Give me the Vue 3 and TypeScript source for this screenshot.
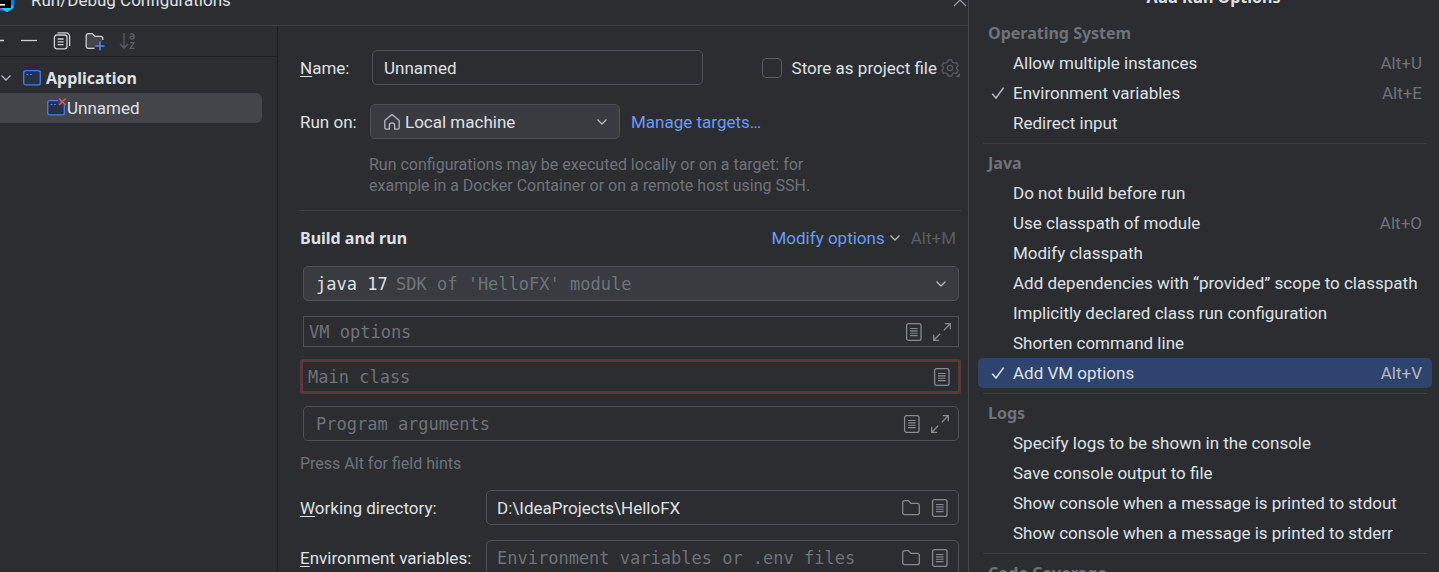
<script setup lang="ts">
import { ref } from 'vue'

interface OptionItem {
  label: string
  shortcut?: string
  checked?: boolean
  active?: boolean
}
interface OptionGroup {
  title: string
  items: OptionItem[]
}

const name = ref('Unnamed')
const storeAsFile = ref(false)
const vmOptions = ref('')
const mainClass = ref('')
const programArgs = ref('')
const workingDir = ref('D:\\IdeaProjects\\HelloFX')
const envVars = ref('')

const groups: OptionGroup[] = [
  {
    title: 'Operating System',
    items: [
      { label: 'Allow multiple instances', shortcut: 'Alt+U' },
      { label: 'Environment variables', shortcut: 'Alt+E', checked: true },
      { label: 'Redirect input' },
    ],
  },
  {
    title: 'Java',
    items: [
      { label: 'Do not build before run' },
      { label: 'Use classpath of module', shortcut: 'Alt+O' },
      { label: 'Modify classpath' },
      { label: 'Add dependencies with “provided” scope to classpath' },
      { label: 'Implicitly declared class run configuration' },
      { label: 'Shorten command line' },
      { label: 'Add VM options', shortcut: 'Alt+V', checked: true, active: true },
    ],
  },
  {
    title: 'Logs',
    items: [
      { label: 'Specify logs to be shown in the console' },
      { label: 'Save console output to file' },
      { label: 'Show console when a message is printed to stdout' },
      { label: 'Show console when a message is printed to stderr' },
    ],
  },
  { title: 'Code Coverage', items: [] },
]
</script>

<template>
  <div class="screen">
    <svg class="defs" aria-hidden="true">
      <symbol id="i-chevron" viewBox="0 0 12 12">
        <path d="M1.5 3.5L6 8L10.5 3.5" fill="none" stroke="currentColor" stroke-width="1.3" />
      </symbol>
      <symbol id="i-list" viewBox="0 0 20 20">
        <rect x="2.6" y="1.6" width="14.4" height="16.8" rx="2" fill="none" stroke="currentColor" stroke-width="1.3" />
        <path d="M6 6.5H13.6M6 8.9H13.6M6 11.2H13.6M6 13.6H13.6" stroke="currentColor" stroke-width="1.1" />
      </symbol>
      <symbol id="i-expand" viewBox="0 0 20 20">
        <path d="M11.8 8.2L18 2M12.8 1.7H18.3V7.2M8.2 11.8L2 18M1.7 12.8V18.3H7.2" fill="none" stroke="currentColor" stroke-width="1.3" />
      </symbol>
      <symbol id="i-folder" viewBox="0 0 20 20">
        <path d="M1.7 4.6A2 2 0 0 1 3.7 2.6H7.2L10 5.3H16.3A2 2 0 0 1 18.3 7.3V14.7A2 2 0 0 1 16.3 16.7H3.7A2 2 0 0 1 1.7 14.7Z" fill="none" stroke="currentColor" stroke-width="1.3" />
      </symbol>
      <symbol id="i-check" viewBox="0 0 16 16">
        <path d="M2.2 8.8L6 13L13.6 2.6" fill="none" stroke="currentColor" stroke-width="1.6" />
      </symbol>
      <symbol id="i-window" viewBox="0 0 18 16">
        <rect x="0.7" y="0.7" width="16.6" height="14.2" rx="2" fill="#25324d" stroke="#4d7cdc" stroke-width="1.3" />
        <path d="M3.5 4.5H5.5M7 4.5H9" stroke="#4d7cdc" stroke-width="1.2" />
      </symbol>
    </svg>

    <main class="dialog">
      <header class="titlebar">
        <svg class="logo" viewBox="0 0 24 24" aria-hidden="true">
          <path d="M0 3L10 0H20L24 6L23 20L16 24L0 20Z" fill="#087cfa" />
          <path d="M0 3L10 0L16 12L11 21L0 20Z" fill="#e0359a" />
          <path d="M10 20L22 17L22 20L16 24Z" fill="#21c8ff" />
          <rect x="3" y="3" width="17" height="17" fill="#000" />
          <rect x="6" y="16" width="8" height="1.6" fill="#fff" />
        </svg>
        <h1>Run/Debug Configurations</h1>
        <button class="close" type="button" aria-label="Close">
          <svg viewBox="0 0 14 14"><path d="M1 1L13 13M13 1L1 13" stroke="currentColor" stroke-width="1.2" /></svg>
        </button>
      </header>

      <div class="body">
        <aside class="sidebar">
          <div class="toolbar">
            <button type="button" aria-label="Add">
              <svg viewBox="0 0 20 20"><path d="M2 9.5H18M10 2V18" stroke="currentColor" stroke-width="1.3" /></svg>
            </button>
            <button type="button" aria-label="Remove">
              <svg viewBox="0 0 20 20"><path d="M2 9.5H18" stroke="currentColor" stroke-width="1.3" /></svg>
            </button>
            <button type="button" aria-label="Copy">
              <svg viewBox="0 0 20 20" fill="none" stroke="currentColor" stroke-width="1.3">
                <path d="M5.5 1.8H14A3.6 3.6 0 0 1 17.6 5.4V15" />
                <rect x="2.4" y="4" width="12.6" height="13.8" rx="2.4" />
                <path d="M5.6 8H11.6M5.6 10.8H11.6M5.6 13.6H11.6" />
              </svg>
            </button>
            <button type="button" aria-label="New folder">
              <svg viewBox="0 0 20 20" fill="none" stroke-width="1.3">
                <path d="M9.5 17.3H3.2A2 2 0 0 1 1.2 15.3V4.6A2 2 0 0 1 3.2 2.6H7.2L10 5.3H15.8A2 2 0 0 1 17.8 7.3V9L14 14Z" fill="#43454a" />
                <path d="M9.5 17.3H3.2A2 2 0 0 1 1.2 15.3V4.6A2 2 0 0 1 3.2 2.6H7.2L10 5.3H15.8A2 2 0 0 1 17.8 7.3V9" stroke="currentColor" />
                <path d="M10.5 15H19.5M15 10.5V19.5" stroke="#548af7" stroke-width="1.5" />
              </svg>
            </button>
            <button type="button" class="off" aria-label="Sort configurations" disabled>
              <svg viewBox="0 0 20 20" fill="none" stroke="currentColor" stroke-width="1.3">
                <path d="M6 2V16.8M2 13L6 17L10 13" />
                <path d="M12 3.4C12.8 2.4 16 2.2 16 4.6V8.3M16 5.2C13.5 5 12 5.5 12 6.8C12 8.6 15.3 8.4 16 6.6M12.2 11.7H16L12.2 17.3H16.4" />
              </svg>
            </button>
          </div>
          <ul class="tree">
            <li class="node parent">
              <svg class="chev"><use href="#i-chevron" /></svg>
              <svg class="win"><use href="#i-window" /></svg>
              <span>Application</span>
            </li>
            <li class="node child">
              <svg class="win bad" viewBox="0 0 18 16">
                <use href="#i-window" width="18" height="16" />
                <path d="M12 -1.5L18 4.5M18 -1.5L12 4.5" stroke="#43454a" stroke-width="4" />
                <path d="M12 -1.5L18.5 5M18.5 -1.5L12 5" stroke="#db5c5c" stroke-width="1.4" />
              </svg>
              <span>Unnamed</span>
            </li>
          </ul>
        </aside>

        <form class="form" @submit.prevent>
          <div class="row name-row">
            <label class="lbl" for="name"><u>N</u>ame:</label>
            <input id="name" v-model="name" class="box name" type="text" />
            <label class="store">
              <input v-model="storeAsFile" type="checkbox" />
              <span>Store as project file</span>
            </label>
            <button class="gear" type="button" aria-label="Storage settings">
              <svg viewBox="0 0 20 20" fill="none" stroke="currentColor" stroke-width="1.2">
                <path d="M7.4 1.8H10.6L11.4 4L13.2 5L15.5 4.6L17.1 7.4L15.6 9.2V10.8L17.1 12.6L15.5 15.4L13.2 15L11.4 16L10.6 18.2H7.4L6.6 16L4.8 15L2.5 15.4L0.9 12.6L2.4 10.8V9.2L0.9 7.4L2.5 4.6L4.8 5L6.6 4Z" stroke-linejoin="round" />
                <circle cx="9" cy="10" r="2.6" />
                <path d="M19 14.5V19.5H14Z" fill="currentColor" stroke="#2b2d30" stroke-width="0.6" />
              </svg>
            </button>
          </div>

          <div class="row run-row">
            <label class="lbl run" for="target">Run on:</label>
            <div class="combo target">
              <select id="target">
                <option>Local machine</option>
              </select>
              <svg class="home" viewBox="0 0 18 18" fill="none" stroke="currentColor" stroke-width="1.3" aria-hidden="true">
                <path d="M1.8 7.6L9 1.4L16.2 7.6V14.6A1.6 1.6 0 0 1 14.6 16.2H11.6V12.4A2.6 2.6 0 0 0 6.4 12.4V16.2H3.4A1.6 1.6 0 0 1 1.8 14.6Z" stroke-linejoin="round" />
              </svg>
              <svg class="chev"><use href="#i-chevron" /></svg>
            </div>
            <a class="link" href="#targets">Manage targets…</a>
          </div>
          <p class="hint indent">Run configurations may be executed locally or on a target: for<br />example in a Docker Container or on a remote host using SSH.</p>

          <hr />

          <div class="row head">
            <h2>Build and run</h2>
            <a class="link" href="#modify">Modify options</a>
            <svg class="chev"><use href="#i-chevron" /></svg>
            <span class="key">Alt+M</span>
          </div>

          <div class="combo jdk">
            <select aria-label="JRE">
              <option>java 17</option>
            </select>
            <span class="note">SDK of 'HelloFX' module</span>
            <svg class="chev"><use href="#i-chevron" /></svg>
          </div>

          <div class="field square">
            <input v-model="vmOptions" class="mono" type="text" placeholder="VM options" aria-label="VM options" />
            <button type="button" aria-label="Insert macros"><svg><use href="#i-list" /></svg></button>
            <button type="button" aria-label="Expand"><svg><use href="#i-expand" /></svg></button>
          </div>
          <div class="field error">
            <input v-model="mainClass" class="mono" type="text" placeholder="Main class" aria-label="Main class" />
            <button type="button" aria-label="Browse classes"><svg><use href="#i-list" /></svg></button>
          </div>
          <div class="field args">
            <input v-model="programArgs" class="mono" type="text" placeholder="Program arguments" aria-label="Program arguments" />
            <button type="button" aria-label="Insert macros"><svg><use href="#i-list" /></svg></button>
            <button type="button" aria-label="Expand"><svg><use href="#i-expand" /></svg></button>
          </div>
          <p class="hint">Press Alt for field hints</p>

          <div class="row pair">
            <label class="lbl" for="dir"><u>W</u>orking directory:</label>
            <div class="field">
              <input id="dir" v-model="workingDir" type="text" />
              <button type="button" aria-label="Browse"><svg><use href="#i-folder" /></svg></button>
              <button type="button" aria-label="Insert macros"><svg><use href="#i-list" /></svg></button>
            </div>
          </div>
          <div class="row pair">
            <label class="lbl" for="env"><u>E</u>nvironment variables:</label>
            <div class="field">
              <input id="env" v-model="envVars" class="mono" type="text" placeholder="Environment variables or .env files" />
              <button type="button" aria-label="Browse"><svg><use href="#i-folder" /></svg></button>
              <button type="button" aria-label="Edit variables"><svg><use href="#i-list" /></svg></button>
            </div>
          </div>
        </form>
      </div>
    </main>

    <aside class="popup">
      <h2 class="popup-title">Add Run Options</h2>
      <section v-for="g in groups" :key="g.title" class="group">
        <h3>{{ g.title }}</h3>
        <button v-for="o in g.items" :key="o.label" type="button" class="opt" :class="{ active: o.active }">
          <span class="tick"><svg v-if="o.checked"><use href="#i-check" /></svg></span>
          <span class="text">{{ o.label }}</span>
          <kbd v-if="o.shortcut">{{ o.shortcut }}</kbd>
        </button>
      </section>
    </aside>
  </div>
</template>

<style>
body {
  margin: 0;
  background: #2b2d30;
}
</style>

<style scoped>
.screen {
  display: flex;
  height: 100vh;
  overflow: hidden;
  background: #2b2d30;
  color: #dfe1e5;
  font: 17px/24px Roboto, "Noto Sans", sans-serif;
}
.screen * {
  box-sizing: border-box;
}
.defs {
  position: absolute;
  width: 0;
  height: 0;
}
svg {
  display: block;
  flex: none;
  overflow: visible;
}
h1, h2, h3, p, ul {
  margin: 0;
  padding: 0;
  font-size: inherit;
}
h2, h3, .parent {
  font-family: "Noto Sans", sans-serif;
  font-size: 16px;
  font-weight: 700;
}
button, input, select {
  margin: 0;
  padding: 0;
  border: 0;
  background: none;
  color: inherit;
  font: inherit;
  outline: none;
}
.chev {
  width: 12px;
  height: 12px;
  color: #b4b8bf;
}

/* The window continues past the top and left edges of the viewport. */
.dialog {
  display: flex;
  flex: 1;
  flex-direction: column;
  min-width: 0;
  margin: -24px 0 0 -24px;
}
.titlebar {
  display: flex;
  flex: none;
  align-items: center;
  height: 50px;
  padding: 0 1px 2px 15px;
  border-bottom: 1px solid #3c3e42;
}
.logo {
  width: 24px;
  height: 24px;
}
h1 {
  flex: 1;
  margin-left: 16px;
  font-weight: 400;
}
.close {
  color: #9da0a8;
}
.close svg {
  width: 14px;
  height: 14px;
}
.body {
  display: flex;
  flex: 1;
}
.sidebar {
  flex: none;
  width: 302px;
  border-right: 1px solid #1e1f22;
}
.toolbar {
  display: flex;
  gap: 5px;
  height: 31px;
  padding-left: 6px;
  border-bottom: 1px solid #1e1f22;
}
.toolbar button {
  display: grid;
  place-items: center;
  width: 28px;
  color: #ced0d6;
}
.toolbar svg {
  width: 20px;
  height: 20px;
}
.toolbar .off {
  color: #5a5d63;
}
.tree {
  padding-top: 6px;
  list-style: none;
}
.node {
  display: flex;
  align-items: center;
  height: 30px;
  margin-right: 15px;
  border-radius: 6px;
}
.parent {
  gap: 5px;
  padding-left: 24px;
}
.parent .chev {
  margin-right: 6px;
}
.child {
  gap: 2px;
  padding-left: 71px;
  background: #43454a;
}
.win {
  width: 18px;
  height: 16px;
}

.form {
  display: flex;
  flex: 1;
  flex-direction: column;
  min-width: 0;
  padding: 24px 7px 0 22px;
}
.row {
  display: flex;
  align-items: center;
}
.lbl {
  flex: none;
  width: 72px;
}
.lbl u {
  text-underline-offset: 2px;
}
.lbl.run {
  width: 70px;
}
.box {
  height: 35px;
  padding: 0 11px;
  border: 1px solid #4e5157;
  border-radius: 5px;
}
.name {
  flex: 1;
  min-width: 0;
  margin-right: 59px;
}
.store {
  display: flex;
  gap: 10px;
  align-items: center;
}
.store input {
  width: 20px;
  height: 20px;
  border: 1px solid #5a5d63;
  border-radius: 4px;
  appearance: none;
}
.gear {
  margin-left: 4px;
  color: #5a5d63;
}
.gear svg {
  width: 20px;
  height: 20px;
}
.run-row {
  margin-top: 19px;
}
.combo {
  display: grid;
  align-items: center;
  height: 35px;
  border: 1px solid #4e5157;
  border-radius: 5px;
  background: #393b40;
}
.combo > * {
  grid-area: 1 / 1;
}
.combo select {
  width: 100%;
  height: 33px;
  appearance: none;
}
.combo .note,
.combo svg {
  pointer-events: none;
}
.combo .chev {
  justify-self: end;
  margin-right: 11px;
}
.target {
  width: 250px;
}
.target select {
  padding-left: 34px;
}
.home {
  width: 18px;
  height: 18px;
  margin-left: 12px;
  color: #b4b8bf;
}
.link {
  color: #6b9bfa;
  text-decoration: none;
}
.target + .link {
  margin-left: 11px;
}
.hint {
  color: #6f737a;
  font-size: 16px;
  line-height: 21px;
}
.indent {
  margin: 15px 0 0 69px;
}
hr {
  width: 100%;
  margin: 14px 0 15px;
  border: 0;
  border-top: 1px solid #3c3e42;
}
.head h2 {
  flex: 1;
}
.head .chev {
  margin: 0 10px 0 4px;
}
.key {
  margin-right: 5px;
  color: #5a5d63;
}
.jdk {
  margin: 16px 2px 0 3px;
}
.jdk select,
.mono,
.note {
  font-family: "DejaVu Sans Mono", monospace;
}
.jdk select {
  padding-left: 12px;
}
.note {
  margin-left: 92px;
  color: #6f737a;
}
.field {
  display: flex;
  gap: 9px;
  align-items: center;
  height: 35px;
  margin: 0 2px 0 3px;
  padding: 0 8px 0 12px;
  border: 1px solid #4e5157;
  border-radius: 5px;
}
.field input {
  flex: 1;
  min-width: 0;
}
.field input::placeholder {
  color: #6f737a;
  opacity: 1;
}
.field button {
  color: #868a91;
}
.field svg {
  width: 20px;
  height: 20px;
}
.square {
  height: 31px;
  margin-top: 15px;
  padding: 0 6px 0 5px;
  border-radius: 0;
}
.square,
.args {
  gap: 8px;
}
.error {
  margin: 12px 0 0;
  padding: 0 6px 0 5px;
  border: 3px solid #5e3838;
  border-radius: 3px;
}
.args {
  margin: 12px 2px 12px 3px;
}
.pair {
  margin-top: 15px;
}
.args + .hint {
  margin-bottom: 1px;
}
.pair .lbl {
  width: 186px;
}
.pair .field {
  flex: 1;
  margin-left: 0;
  padding-left: 10px;
}

.popup {
  flex: none;
  width: 471px;
  margin-top: -24px;
  padding: 0 7px 0 9px;
  border-left: 1px solid #43454a;
}
.popup-title {
  height: 42px;
  padding-left: 17px;
  line-height: 42px;
  text-align: center;
}
.group + .group::before {
  display: block;
  height: 1px;
  margin: 5px 5px 4px;
  background: #3c3e42;
  content: "";
}
h3 {
  padding-left: 10px;
  color: #6f737a;
  line-height: 30px;
}
.opt {
  display: flex;
  align-items: center;
  width: 100%;
  height: 30px;
  padding: 0 10px;
  border-radius: 5px;
  text-align: left;
}
.tick {
  width: 25px;
  padding-left: 2px;
  color: #b4b8bf;
}
.tick svg {
  width: 16px;
  height: 16px;
}
.text {
  flex: 1;
  white-space: nowrap;
}
kbd {
  color: #6f737a;
  font: inherit;
}
.active {
  background: #2e436e;
}
.active .tick {
  color: #dfe1e5;
}
.active kbd {
  color: #b4b8bf;
}
</style>
